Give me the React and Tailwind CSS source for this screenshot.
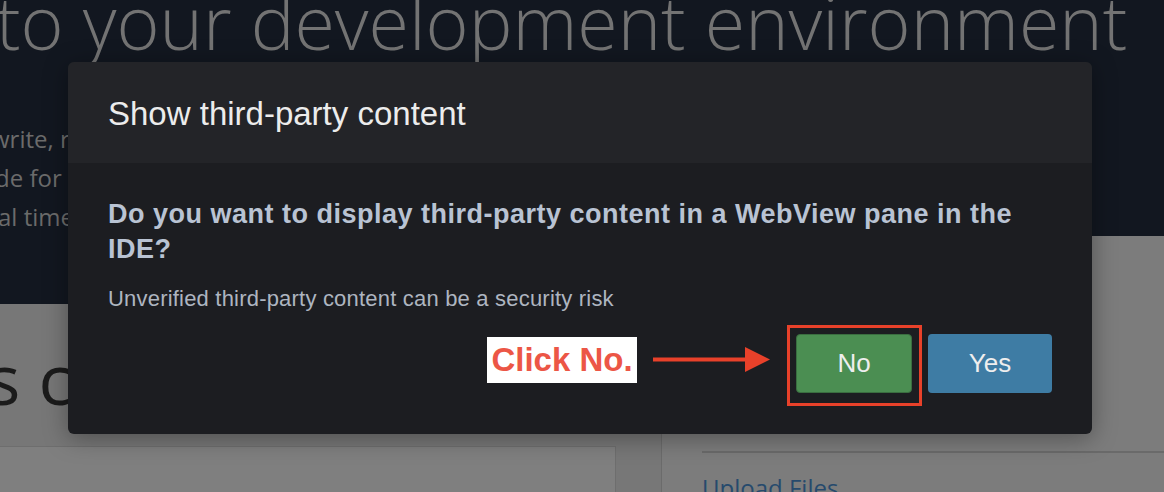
import React from "react";

const ClickArrow = () => (
    <svg width="117" height="25" viewBox="0 0 117 25" className="mt-[22px] ml-[16px] mr-[17px] shrink-0">
        <line x1="0" y1="12.5" x2="94" y2="12.5" stroke="#e8412a" strokeWidth="4" />
        <polygon points="92,0 117,12.5 92,25" fill="#e8412a" />
    </svg>
);

const ThirdPartyModal = () => {
    return (
        <div className="absolute left-[68px] top-[62px] w-[1024px] h-[372px] rounded-md overflow-hidden bg-[#1c1d21] shadow-[0_4px_24px_rgba(0,0,0,0.35)] font-['Liberation_Sans',Arial,sans-serif]">
            <div className="h-[101px] bg-[#232428] px-[40px] flex items-center">
                <h2 className="text-[33px] text-[#ececec] pt-[2px]">
                    Show third-party content
                </h2>
            </div>
            <div className="px-[40px] pt-[34px]">
                <p className="text-[27px] leading-[35px] font-bold text-[#b9c3d3] tracking-[0.5px]">
                    Do you want to display third-party content in a WebView pane in the IDE?
                </p>
                <p className="mt-[18px] text-[22px] leading-[28px] text-[#aeb5c0] tracking-[0.2px]">
                    Unverified third-party content can be a security risk
                </p>
                <div className="mt-[12px] flex items-start justify-end">
                    <div className="mt-[12px] w-[150px] h-[46px] bg-white flex items-center justify-center">
                        <span className="text-[33px] font-bold text-[#ec5646]">Click No.</span>
                    </div>
                    <ClickArrow />
                    <div className="border-[3px] border-[#e8412a] pl-[6px] pr-[7px] pt-[6px] pb-[10px]">
                        <button className="w-[116px] h-[59px] rounded-[4px] bg-[#4b8e52] border border-[#3a6d40] text-[26px] text-[#eeeeee]">
                            No
                        </button>
                    </div>
                    <button className="mt-[9px] ml-[6px] w-[124px] h-[59px] rounded-[4px] bg-[#3e7ca4] text-[26px] text-[#eeeeee]">
                        Yes
                    </button>
                </div>
            </div>
        </div>
    );
};

const App = () => {
    return (
        <div className="relative w-[1164px] h-[492px] overflow-hidden bg-[#121720] font-['Open_Sans',sans-serif]">
            <div className="h-[304px] flex flex-col bg-[#121720]">
                <h1 className="-mt-[16px] -ml-[4px] text-[73.5px] leading-[75px] font-light text-[#737373] whitespace-nowrap">
                    to your development environment
                </h1>
                <div className="mt-[60px] text-[24px] leading-[39px] text-[#6b6b6b] whitespace-nowrap">
                    <p className="-ml-[9px]">write, run, and debug your code</p>
                    <p className="-ml-[5px]">de for serverless applications</p>
                    <p className="-ml-[2px]">al time with your team</p>
                </div>
            </div>
            <div className="flex h-[188px]">
                <div className="w-[661px] bg-[#777777] flex flex-col">
                    <div className="mt-[39px] -ml-[13px] text-[70px] leading-[70px] text-[#1b1b1b] whitespace-nowrap">
                        s c
                    </div>
                    <div className="mt-[33px] w-[616px] flex-1 bg-[#7f7f7f] border-t border-r border-[#6e6e6e]" />
                </div>
                <div className="flex-1 -mt-[68px] bg-[#7c7c7c] border-l border-[#6b6b6b] pl-[40px]">
                    <div className="mt-[215px] h-[2px] bg-[#6a6a6a]" />
                    <div className="mt-[19px] text-[24px] leading-[32px] text-[#264a6d]">Upload Files</div>
                </div>
            </div>
            <ThirdPartyModal />
        </div>
    );
};

export default App;
